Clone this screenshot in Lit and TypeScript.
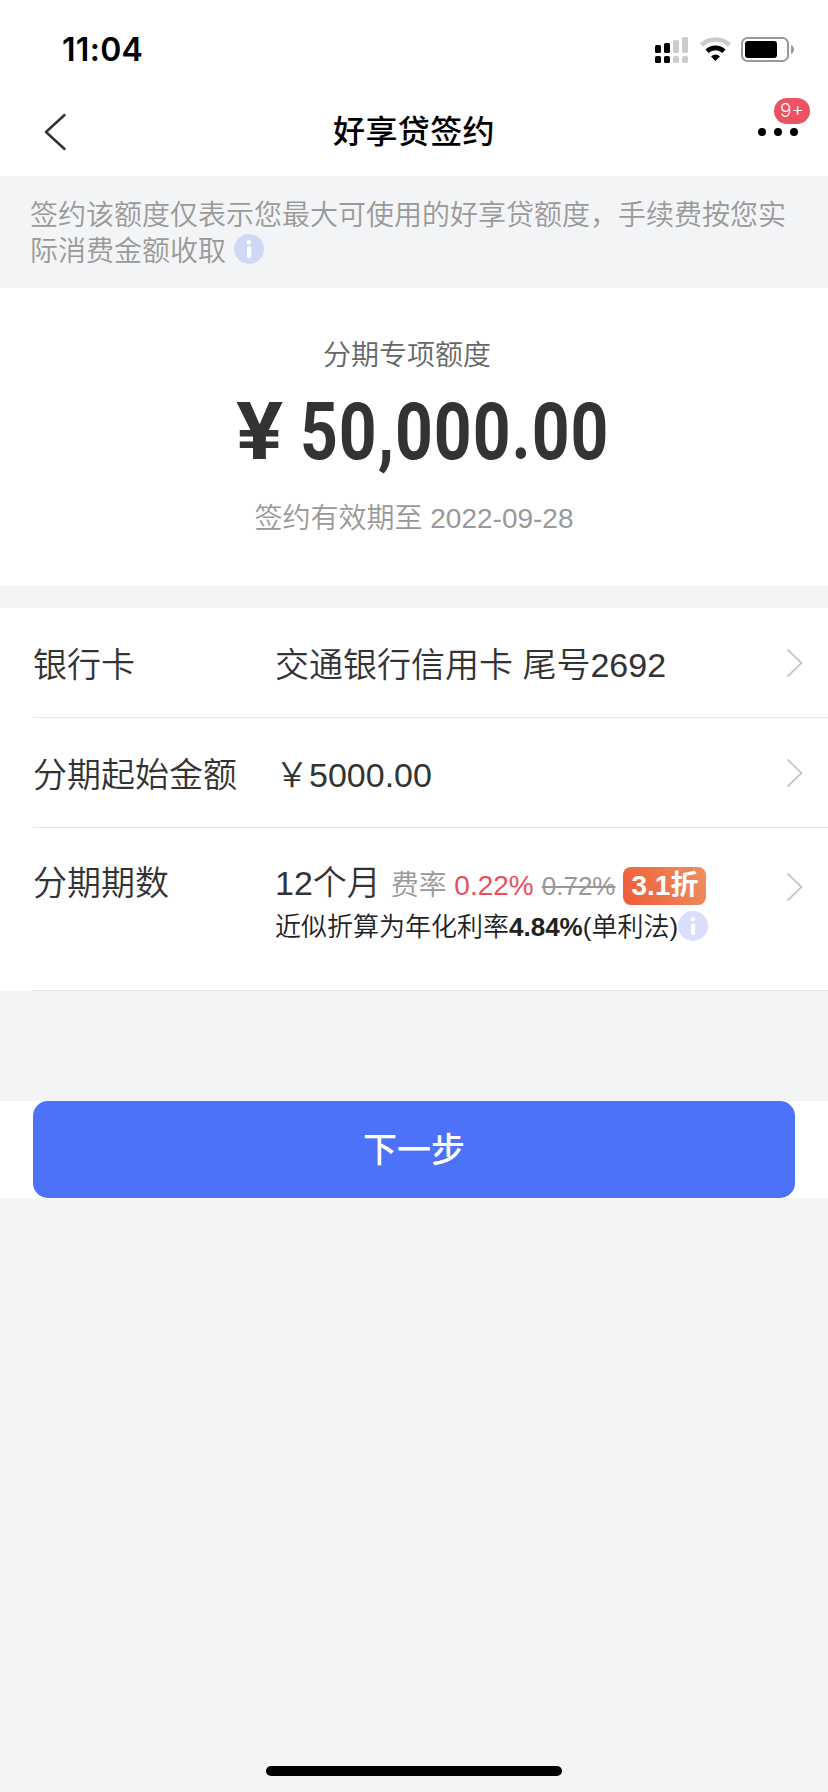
import { LitElement, html, css, svg } from "lit";
import { customElement, property } from "lit/decorators.js";

@customElement("info-icon")
class InfoIcon extends LitElement {
  static styles = css`
    :host { display: inline-block; width: 30px; height: 30px; color: #d0d8f8; }
    .icon { display: block; }
  `;
  render() {
    return html`<svg class="icon" width="30" height="30" viewBox="0 0 30 30">
      <circle cx="15" cy="15" r="15" fill="currentColor"></circle>
      <circle cx="15" cy="8.2" r="2.2" fill="#fff"></circle>
      <rect x="13" y="12.6" width="4.2" height="11.4" rx="1.2" fill="#fff"></rect>
    </svg>`;
  }
}

@customElement("status-bar")
class StatusBar extends LitElement {
  static styles = css`
    :host { display: flex; justify-content: space-between; height: 88px; box-sizing: border-box; padding: 0 34px 0 62px; }
    .time { font: 600 32px/40px Inter, sans-serif; padding-top: 30px; color: #000; letter-spacing: 0.3px; }
    .icons { display: block; padding-top: 34px; }
  `;
  render() {
    const bars = [[0, 45, "#000"], [9, 43, "#000"], [18, 40, "#ccc"], [27, 37, "#ccc"]] as const;
    return html`
      <div class="time">11:04</div>
      <svg class="icons" width="140" height="32" viewBox="654 34 140 32">
        ${bars.map(([x, y, c]) => svg`
          <rect x=${655 + x} y=${y} width="6" height=${53 - y} rx="1.6" fill=${c}></rect>
          <rect x=${655 + x} y="56" width="6" height="7" rx="1.6" fill=${c}></rect>`)}
        <path d="M701.5 45 A20.5 20.5 0 0 1 729.5 45" fill="none" stroke="#ccc" stroke-width="4.6"></path>
        <path d="M707 51.2 A12.5 12.5 0 0 1 724 51.2" fill="none" stroke="#000" stroke-width="4.6"></path>
        <path d="M711 56.6 Q715.5 52.4 720 56.6 L715.5 61 Z" fill="#000"></path>
        <rect x="742" y="38" width="46" height="23" rx="5.5" fill="none" stroke="#999" stroke-width="2"></rect>
        <rect x="745" y="41" width="32" height="17" rx="3" fill="#000"></rect>
        <path d="M791 45 Q794 46.5 794 49.5 Q794 52.5 791 54 Z" fill="#999"></path>
      </svg>`;
  }
}

@customElement("form-row")
class FormRow extends LitElement {
  @property() label = "";
  static styles = css`
    :host { display: flex; margin-left: 33px; height: 110px; box-sizing: border-box; border-bottom: 1px solid #e3e4e6; color: #333; font-size: 34px; line-height: 48px; padding-top: var(--row-top, 33px); }
    .label { width: 242px; flex: none; white-space: nowrap; }
    .value { flex: 1; white-space: nowrap; }
    .chevron { flex: none; margin: var(--chevron-top, 7px) 25px 0 0; }
  `;
  render() {
    return html`
      <div class="label">${this.label}</div>
      <div class="value"><slot></slot></div>
      <svg class="chevron" width="17" height="30" viewBox="0 0 17 30">
        <path d="M1.5 1.5 L15.5 15 L1.5 28.5" fill="none" stroke="#c8c8cb" stroke-width="1.8"></path>
      </svg>`;
  }
}

@customElement("app-root")
class AppRoot extends LitElement {
  static styles = css`
    :host { display: flex; flex-direction: column; width: 828px; height: 1792px; background: #f3f4f6; font-family: "Liberation Sans", "Noto Sans CJK SC", sans-serif; font-weight: 350; overflow: hidden; }
    .top { background: #fff; height: 176px; flex: none; }
    .nav { display: grid; grid-template-columns: 1fr auto 1fr; height: 88px; align-items: center; }
    .back { margin-left: 43px; }
    .title { font-size: 32px; line-height: 44px; font-weight: 500; letter-spacing: 0.4px; color: #000; }
    .more { position: relative; justify-self: end; width: 40px; height: 8px; margin-right: 30px; display: flex; justify-content: space-between; }
    .dot { width: 8px; height: 8px; border-radius: 50%; background: #000; }
    .count { position: absolute; left: 16px; top: -30px; width: 36px; height: 26px; border-radius: 13px; background: #ee5162; color: #fff; font: 300 19px/26px Inter, sans-serif; text-align: center; }
    .notice { flex: none; height: 112px; box-sizing: border-box; padding: 22px 0 0 30px; font-size: 28px; line-height: 36px; color: #999; white-space: nowrap; }
    .notice-line { display: flex; align-items: flex-start; height: 36px; }
    .notice-icon { margin: 0 0 0 8px; }
    .summary { flex: none; height: 298px; box-sizing: border-box; background: #fff; display: flex; flex-direction: column; align-items: center; padding-top: 48px; font-size: 28px; line-height: 40px; }
    .caption { color: #666; padding-right: 14px; }
    .amount { align-self: flex-start; display: flex; height: 76px; margin: 18px 0 0 236px; color: #333; font: 700 80px/76px Roboto, sans-serif; white-space: nowrap; }
    .yen { width: 64px; transform: scaleX(1.1); transform-origin: left; }
    .figure { letter-spacing: 1.2px; transform: scaleX(0.825); transform-origin: left; }
    .expiry { color: #999; margin-top: 29px; }
    .rows { flex: none; margin-top: 22px; background: #fff; }
    .term { height: 163px; --row-top: 31px; --chevron-top: 13px; }
    .term-line { display: flex; align-items: baseline; height: 50px; }
    .rate-label { font-size: 28px; color: #999; margin-left: 10px; }
    .rate { font-size: 28px; color: #f04c5e; margin-left: 7.5px; }
    .old { font-size: 26px; color: #999; margin-left: 8px; text-decoration: line-through; }
    .badge { box-sizing: border-box; height: 38px; padding: 0 8px; margin-left: 8px; border-radius: 8px; font-size: 28px; line-height: 38px; font-weight: 700; color: #fff; background: linear-gradient(60deg, #ed5b38, #ee925f); }
    .annual { display: flex; align-items: center; font-size: 26px; line-height: 36px; color: #222; }
    .strong { font-weight: 700; }
    .annual-icon { color: #d8defc; position: relative; top: -1px; }
    .action { flex: none; display: flex; margin-top: 110px; background: #fff; padding: 0 33px; }
    .next { flex: 1; height: 97px; border: 0; border-radius: 15px; background: #4b72f8; color: #fff; font: 500 34px/97px "Liberation Sans", "Noto Sans CJK SC", sans-serif; padding: 1px 0 0; }
    .home { width: 296px; height: 10px; border-radius: 5px; background: #000; margin: auto auto 16px 266px; }
  `;
  render() {
    return html`
      <div class="top">
        <status-bar></status-bar>
        <div class="nav">
          <svg class="back" width="24" height="38" viewBox="0 0 24 38">
            <path d="M21.5 2 L3 19 L21.5 36" fill="none" stroke="#333" stroke-width="2.5" stroke-linecap="round" stroke-linejoin="round"></path>
          </svg>
          <div class="title">好享贷签约</div>
          <div class="more">
            <span class="dot"></span><span class="dot"></span><span class="dot"></span>
            <span class="count">9+</span>
          </div>
        </div>
      </div>
      <div class="notice">
        <div class="notice-line">签约该额度仅表示您最大可使用的好享贷额度，手续费按您实</div>
        <div class="notice-line">际消费金额收取<info-icon class="notice-icon"></info-icon></div>
      </div>
      <div class="summary">
        <div class="caption">分期专项额度</div>
        <div class="amount"><span class="yen">¥</span><span class="figure">50,000.00</span></div>
        <div class="expiry">签约有效期至 2022-09-28</div>
      </div>
      <div class="rows">
        <form-row label="银行卡">交通银行信用卡 尾号2692</form-row>
        <form-row label="分期起始金额">￥5000.00</form-row>
        <form-row class="term" label="分期期数">
          <div class="term-line">
            <span>12个月</span><span class="rate-label">费率</span><span class="rate">0.22%</span><span class="old">0.72%</span><span class="badge">3.1折</span>
          </div>
          <div class="annual">近似折算为年化利率<span class="strong">4.84%</span>(单利法)<info-icon class="annual-icon"></info-icon></div>
        </form-row>
      </div>
      <div class="action"><button class="next">下一步</button></div>
      <div class="home"></div>`;
  }
}
